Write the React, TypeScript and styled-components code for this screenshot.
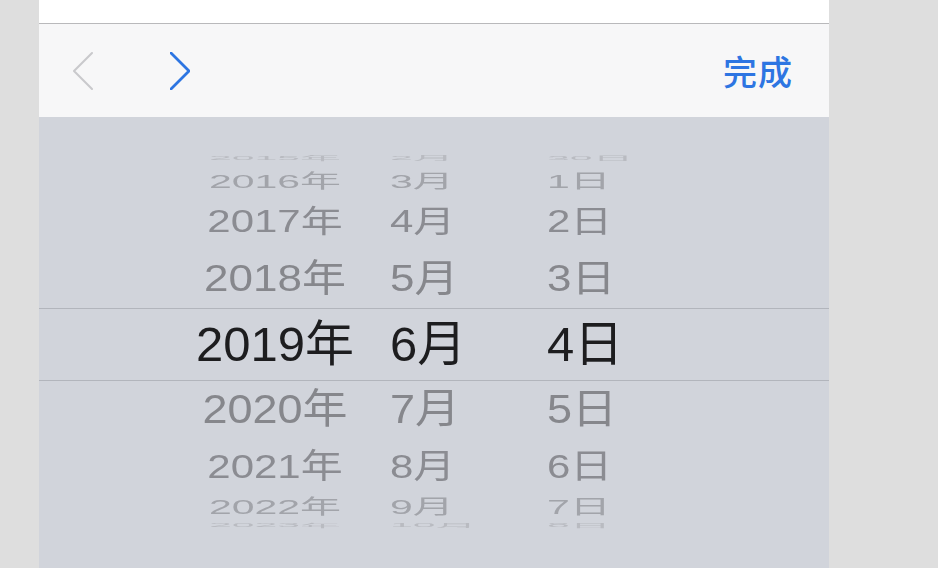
import React from "react";
import styled, { createGlobalStyle } from "styled-components";

const GlobalStyle = createGlobalStyle`
  html, body {
    margin: 0;
    padding: 0;
    background: #dedede;
  }
  body {
    font-family: "Liberation Sans", "Noto Sans CJK SC", sans-serif;
  }
`;

const Screen = styled.div`
  width: 790px;
  height: 568px;
  margin-left: 39px;
  display: flex;
  flex-direction: column;
  overflow: hidden;
`;

const TopStrip = styled.div`
  height: 23px;
  background: #ffffff;
  border-bottom: 1px solid #b9b9bb;
`;

const Toolbar = styled.div`
  height: 93px;
  background: #f7f7f8;
  display: flex;
  align-items: center;
  padding: 0 36px 0 34px;
`;

const NavButton = styled.button<{ $active: boolean }>`
  width: 20px;
  height: 38px;
  padding: 0;
  border: none;
  background: none;
  display: flex;
  color: ${({ $active }) => ($active ? "#2d75e2" : "#c9c9cc")};
  & + & {
    margin-left: 77px;
  }
`;

const Done = styled.div`
  margin-left: auto;
  font-family: "Noto Sans CJK SC", sans-serif;
  font-size: 34px;
  font-weight: 500;
  color: #2d75e2;
  line-height: 1;
  letter-spacing: 1px;
`;

const Picker = styled.div`
  flex: 1;
  background: #d1d4db;
  display: flex;
  flex-direction: column;
  padding-top: 33px;
`;

const Row = styled.div<{ $h: number; $selected?: boolean }>`
  height: ${({ $h }) => $h}px;
  flex-shrink: 0;
  display: flex;
  align-items: center;
  box-sizing: border-box;
  border-top: ${({ $selected }) => ($selected ? "1px solid #b2b5bc" : "none")};
  border-bottom: ${({ $selected }) => ($selected ? "1px solid #b2b5bc" : "none")};
`;

const Cell = styled.div<{ $w: number; $ml: number; $align: "center" | "left" }>`
  width: ${({ $w }) => $w}px;
  margin-left: ${({ $ml }) => $ml}px;
  text-align: ${({ $align }) => $align};
  line-height: 1;
  white-space: nowrap;
`;

const Label = styled.span<{
  $fs: number;
  $sy: number;
  $color: string;
  $blur: number;
  $origin: string;
}>`
  display: inline-block;
  font-size: ${({ $fs }) => $fs}px;
  color: ${({ $color }) => $color};
  transform: scaleY(${({ $sy }) => $sy});
  transform-origin: ${({ $origin }) => $origin};
  filter: ${({ $blur }) => ($blur ? `blur(${$blur}px)` : "none")};
`;

type RowSpec = {
  y: string;
  m: string;
  d: string;
  h: number;
  fs: number;
  sy: number;
  color: string;
  blur: number;
  selected?: boolean;
};

const rows: RowSpec[] = [
  { y: "2015年", m: "2月", d: "30日", h: 16, fs: 41, sy: 0.14, color: "#b9bbc1", blur: 0.6 },
  { y: "2016年", m: "3月", d: "1日", h: 31, fs: 41, sy: 0.46, color: "#a2a4aa", blur: 0.4 },
  { y: "2017年", m: "4月", d: "2日", h: 50, fs: 42, sy: 0.74, color: "#8b8c92", blur: 0.2 },
  { y: "2018年", m: "5月", d: "3日", h: 61, fs: 44, sy: 0.86, color: "#86878c", blur: 0 },
  { y: "2019年", m: "6月", d: "4日", h: 73, fs: 49, sy: 1, color: "#1d1d1f", blur: 0, selected: true },
  { y: "2020年", m: "7月", d: "5日", h: 57, fs: 45, sy: 0.9, color: "#86878c", blur: 0 },
  { y: "2021年", m: "8月", d: "6日", h: 57, fs: 42, sy: 0.8, color: "#8b8c92", blur: 0.2 },
  { y: "2022年", m: "9月", d: "7日", h: 24, fs: 41, sy: 0.5, color: "#a2a4aa", blur: 0.4 },
  { y: "2023年", m: "10月", d: "8日", h: 12, fs: 41, sy: 0.12, color: "#b9bbc1", blur: 0.6 },
];

const Chevron = ({ dir }: { dir: "left" | "right" }) => (
  <svg width="20" height="38" viewBox="0 0 20 38" fill="none">
    <polyline
      points={dir === "left" ? "19,1 1,19 19,37" : "1,1 19,19 1,37"}
      stroke="currentColor"
      strokeWidth={dir === "left" ? 2 : 2.8}
      strokeLinecap="round"
      strokeLinejoin="round"
    />
  </svg>
);

export default function App() {
  return (
    <>
      <GlobalStyle />
      <Screen>
        <TopStrip />
        <Toolbar>
          <NavButton $active={false}>
            <Chevron dir="left" />
          </NavButton>
          <NavButton $active>
            <Chevron dir="right" />
          </NavButton>
          <Done>完成</Done>
        </Toolbar>
        <Picker>
          {rows.map((r) => (
            <Row key={r.y} $h={r.h} $selected={r.selected}>
              <Cell $w={160} $ml={156} $align="center">
                <Label $fs={r.fs} $sy={r.sy} $color={r.color} $blur={r.blur} $origin="center">
                  {r.y}
                </Label>
              </Cell>
              <Cell $w={120} $ml={35} $align="left">
                <Label $fs={r.fs} $sy={r.sy} $color={r.color} $blur={r.blur} $origin="left center">
                  {r.m}
                </Label>
              </Cell>
              <Cell $w={120} $ml={37} $align="left">
                <Label $fs={r.fs} $sy={r.sy} $color={r.color} $blur={r.blur} $origin="left center">
                  {r.d}
                </Label>
              </Cell>
            </Row>
          ))}
        </Picker>
      </Screen>
    </>
  );
}
